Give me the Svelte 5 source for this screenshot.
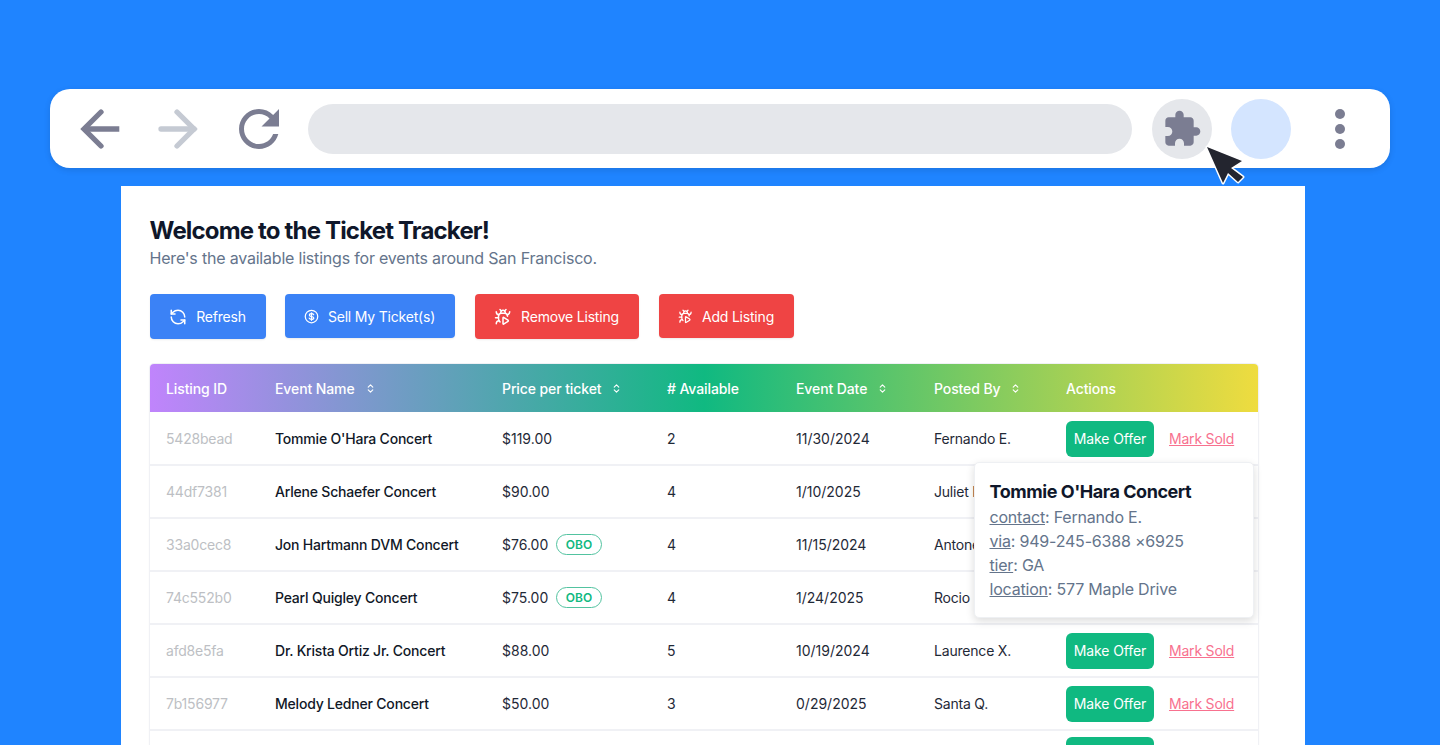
<script>
  const columns = [
    { label: 'Listing ID', sort: false },
    { label: 'Event Name', sort: true },
    { label: 'Price per ticket', sort: true },
    { label: '# Available', sort: false },
    { label: 'Event Date', sort: true },
    { label: 'Posted By', sort: true },
    { label: 'Actions', sort: false }
  ];
  const rows = [
    { id: '5428bead', name: "Tommie O'Hara Concert", price: '$119.00', obo: false, qty: 2, date: '11/30/2024', by: 'Fernando E.', actions: true },
    { id: '44df7381', name: 'Arlene Schaefer Concert', price: '$90.00', obo: false, qty: 4, date: '1/10/2025', by: 'Juliet I.', actions: false },
    { id: '33a0cec8', name: 'Jon Hartmann DVM Concert', price: '$76.00', obo: true, qty: 4, date: '11/15/2024', by: 'Antone R.', actions: false },
    { id: '74c552b0', name: 'Pearl Quigley Concert', price: '$75.00', obo: true, qty: 4, date: '1/24/2025', by: 'Rocio B.', actions: false },
    { id: 'afd8e5fa', name: 'Dr. Krista Ortiz Jr. Concert', price: '$88.00', obo: false, qty: 5, date: '10/19/2024', by: 'Laurence X.', actions: true },
    { id: '7b156977', name: 'Melody Ledner Concert', price: '$50.00', obo: false, qty: 3, date: '0/29/2025', by: 'Santa Q.', actions: true }
  ];
  const details = [
    ['contact', 'Fernando E.'],
    ['via', '949-245-6388 ×6925'],
    ['tier', 'GA'],
    ['location', '577 Maple Drive']
  ];
</script>

{#snippet bug()}
  <svg class="ico" viewBox="0 0 24 24" fill="none" stroke="currentColor" stroke-width="2" stroke-linecap="round" stroke-linejoin="round">
    <path d="M12.765 21.522a.5.5 0 0 1-.765-.424v-8.196a.5.5 0 0 1 .765-.424l5.878 3.674a1 1 0 0 1 0 1.696z" />
    <path d="M14.12 3.88 16 2" />
    <path d="M18 11a4 4 0 0 0-4-4h-4a4 4 0 0 0-4 4v3a6.1 6.1 0 0 0 2 4.5" />
    <path d="M20.97 5c0 2.1-1.6 3.8-3.5 4" />
    <path d="M3 21c0-2.1 1.7-3.9 3.8-4" />
    <path d="M6 13H2" />
    <path d="M6.53 9C4.6 8.8 3 7.1 3 5" />
    <path d="m8 2 1.88 1.88" />
    <path d="M9 7.13v-1a3.003 3.003 0 1 1 6 0v1" />
  </svg>
{/snippet}

<div class="page">
  <header class="toolbar">
    <svg class="nav" viewBox="0 0 60 60"><path class="arrow" d="M31 13 14 30l17 17" /><path class="tail" d="M49.3 30H14" /></svg>
    <svg class="nav faded" viewBox="0 0 60 60"><path class="arrow" d="M28 13l17 17-17 17" /><path class="arrow" d="M12 30h33" /></svg>
    <svg class="nav fill" viewBox="0 0 24 24"><path d="M17.65 6.35C16.2 4.9 14.21 4 12 4c-4.42 0-7.99 3.58-7.99 8s3.57 8 7.99 8c3.73 0 6.84-2.55 7.73-6h-2.08c-.82 2.33-3.04 4-5.65 4-3.31 0-6-2.69-6-6s2.69-6 6-6c1.66 0 3.14.69 4.22 1.78L13 11h7V4l-2.35 2.35z" /></svg>
    <div class="address"></div>
    <div class="round ext">
      <svg viewBox="0 0 24 24"><path d="M20.5 11H19V7c0-1.1-.9-2-2-2h-4V3.5C13 2.12 11.88 1 10.5 1S8 2.12 8 3.5V5H4c-1.1 0-1.99.9-1.99 2v3.8H3.5c1.49 0 2.7 1.21 2.7 2.7s-1.21 2.7-2.7 2.7H2V20c0 1.1.9 2 2 2h3.8v-1.5c0-1.49 1.21-2.7 2.7-2.7 1.49 0 2.7 1.21 2.7 2.7V22H17c1.1 0 2-.9 2-2v-4h1.5c1.38 0 2.5-1.12 2.5-2.5S21.88 11 20.5 11z" /></svg>
    </div>
    <div class="round avatar"></div>
    <div class="kebab"><span></span><span></span><span></span></div>
  </header>

  <svg class="cursor" viewBox="0 0 44 44">
    <path d="M4 2 39 16 28 23 40 32 35 37 25 28 20 38Z" fill="#23252f" stroke="#fff" stroke-width="3" stroke-linejoin="round" paint-order="stroke" />
  </svg>

  <main class="card">
    <h1>Welcome to the Ticket Tracker!</h1>
    <p class="sub">Here's the available listings for events around San Francisco.</p>

    <div class="actions">
      <button class="btn blue tall refresh">
        <svg class="ico" viewBox="0 0 24 24" fill="none" stroke="currentColor" stroke-width="2" stroke-linecap="round" stroke-linejoin="round">
          <path d="M21 12a9 9 0 0 0-9-9 9.75 9.75 0 0 0-6.74 2.74L3 8" /><path d="M3 3v5h5" />
          <path d="M3 12a9 9 0 0 0 9 9 9.75 9.75 0 0 0 6.74-2.74L21 16" /><path d="M16 16h5v5" />
        </svg>
        Refresh
      </button>
      <button class="btn blue sell">
        <svg class="ico small" viewBox="0 0 24 24" fill="none" stroke="currentColor" stroke-width="2" stroke-linecap="round" stroke-linejoin="round">
          <circle cx="12" cy="12" r="10" />
          <path d="M15.5 9.2c-.5-1-1.7-1.7-3.5-1.7-2 0-3.4.9-3.4 2.3 0 3.3 7 1.4 7 4.5 0 1.4-1.5 2.2-3.6 2.2-1.8 0-3.1-.7-3.6-1.8" />
          <path d="M12 6v12" />
        </svg>
        Sell My Ticket(s)
      </button>
      <button class="btn red tall remove">{@render bug()} Remove Listing</button>
      <button class="btn red add">{@render bug()} Add Listing</button>
    </div>

    <div class="table-wrap">
      <table>
        <colgroup>
          <col class="c1" /><col class="c2" /><col class="c3" /><col class="c4" /><col class="c5" /><col class="c6" /><col />
        </colgroup>
        <thead>
          <tr>
            {#each columns as c}
              <th>
                <span class="th">{c.label}
                  {#if c.sort}
                    <svg class="sort" viewBox="0 0 24 24" fill="none" stroke="currentColor" stroke-width="2.4" stroke-linecap="round" stroke-linejoin="round"><path d="m7 15 5 5 5-5" /><path d="m7 9 5-5 5 5" /></svg>
                  {/if}
                </span>
              </th>
            {/each}
          </tr>
        </thead>
        <tbody>
          {#each rows as r}
            <tr>
              <td class="id">{r.id}</td>
              <td class="name">{r.name}</td>
              <td>
                <span class="price">{r.price}{#if r.obo}<span class="obo">OBO</span>{/if}</span>
              </td>
              <td>{r.qty}</td>
              <td>{r.date}</td>
              <td class="by">{r.by}</td>
              <td>
                {#if r.actions}
                  <span class="row-actions">
                    <button class="offer">Make Offer</button>
                    <a href="#sold" class="sold">Mark Sold</a>
                  </span>
                {/if}
              </td>
            </tr>
          {/each}
          <tr>
            <td colspan="6"></td>
            <td><span class="row-actions"><button class="offer" aria-label="Make Offer"></button></span></td>
          </tr>
        </tbody>
      </table>

      <aside class="tip">
        <h2>Tommie O'Hara Concert</h2>
        {#each details as [k, v]}
          <p><u>{k}</u>: {v}</p>
        {/each}
      </aside>
    </div>
  </main>
</div>

<style>
  :global(body) {
    margin: 0;
    background: #1f84ff;
  }
  .page {
    position: relative;
    height: 745px;
    overflow: hidden;
    padding-top: 89px;
    box-sizing: border-box;
    background: #1f84ff;
    font-family: Inter, "Liberation Sans", sans-serif;
    font-size: 14px;
    color: #111827;
  }
  .toolbar {
    display: flex;
    align-items: center;
    gap: 19.25px;
    height: 79px;
    box-sizing: border-box;
    margin: 0 50px;
    padding: 0 20px;
    background: #fff;
    border-radius: 20px;
    box-shadow: 0 2px 6px rgba(0, 0, 0, 0.12);
  }
  .nav {
    width: 60px;
    height: 60px;
    flex: none;
    color: #7b7d92;
    fill: none;
  }
  .nav.fill {
    fill: #7b7d92;
  }
  .nav.faded {
    color: #c5cad3;
  }
  .arrow {
    stroke: currentColor;
    stroke-width: 5.3;
    stroke-linecap: round;
    stroke-linejoin: miter;
  }
  .tail {
    stroke: currentColor;
    stroke-width: 5.3;
  }
  .address {
    flex: 1;
    height: 50px;
    border-radius: 25px;
    background: #e5e7eb;
  }
  .round {
    display: flex;
    align-items: center;
    justify-content: center;
    width: 60px;
    height: 60px;
    flex: none;
    border-radius: 50%;
  }
  .ext {
    background: #e5e7eb;
  }
  .ext svg {
    width: 40px;
    height: 40px;
    fill: #7b7d92;
  }
  .avatar {
    background: #d4e5ff;
  }
  .kebab {
    display: flex;
    flex-direction: column;
    align-items: center;
    gap: 5px;
    width: 60px;
    flex: none;
  }
  .kebab span {
    width: 10px;
    height: 10px;
    border-radius: 50%;
    background: #7b7d92;
  }
  .cursor {
    position: absolute;
    left: 1203px;
    top: 145px;
    width: 44px;
    height: 44px;
    z-index: 3;
  }
  .card {
    width: 1184px;
    box-sizing: border-box;
    margin: 18px 0 0 121px;
    padding: 29px 46px 0 28.5px;
    background: #fff;
  }
  h1 {
    margin: 0;
    font-size: 24px;
    line-height: 32px;
    font-weight: 700;
    letter-spacing: -0.83px;
    color: #0f172a;
  }
  .sub {
    margin: -1px 0 0;
    font-size: 16px;
    line-height: 24px;
    letter-spacing: -0.2px;
    color: #64748b;
  }
  .actions {
    display: flex;
    align-items: flex-start;
    margin-top: 24px;
    height: 45px;
  }
  .btn {
    display: flex;
    align-items: center;
    justify-content: center;
    gap: 9px;
    height: 44px;
    padding: 0;
    border: 0;
    border-radius: 4px;
    color: #fff;
    font: 400 14px Inter, "Liberation Sans", sans-serif;
    letter-spacing: -0.2px;
    box-shadow: 0 1px 2px rgba(0, 0, 0, 0.08);
  }
  .tall {
    height: 45px;
  }
  .blue {
    background: #3b82f6;
  }
  .red {
    background: #ef4444;
  }
  .refresh {
    width: 116px;
    margin-right: 19px;
  }
  .sell {
    width: 170px;
    margin-right: 20px;
  }
  .remove {
    width: 164px;
    margin-right: 20px;
  }
  .add {
    width: 135px;
  }
  .ico {
    width: 18px;
    height: 18px;
    flex: none;
  }
  .ico.small {
    width: 15px;
    height: 15px;
  }
  .add .ico {
    width: 15px;
    height: 15px;
  }
  .table-wrap {
    position: relative;
    margin: 25px 0 0 0.5px;
    width: 1108px;
  }
  table {
    width: 100%;
    table-layout: fixed;
    border-collapse: separate;
    border-spacing: 0;
    border-radius: 4px;
    overflow: hidden;
    box-shadow: 0 0 0 1px #f0f1f5, 0 1px 3px rgba(0, 0, 0, 0.06);
  }
  .c1 {
    width: 109px;
  }
  .c2 {
    width: 227px;
  }
  .c3 {
    width: 165px;
  }
  .c4 {
    width: 129px;
  }
  .c5 {
    width: 138px;
  }
  .c6 {
    width: 132px;
  }
  thead tr {
    height: 48px;
    background: linear-gradient(90deg, #c084fc 0%, #10b981 50%, #efdc3f 100%);
  }
  th {
    padding: 0 0 0 16px;
    text-align: left;
    font-weight: 500;
    letter-spacing: -0.1px;
    color: #fff;
  }
  .th {
    display: inline-flex;
    align-items: center;
    gap: 10px;
  }
  .sort {
    width: 11px;
    height: 11px;
  }
  tbody tr {
    height: 53px;
  }
  tbody tr:first-child {
    height: 54px;
  }
  td {
    padding: 0 0 0 16px;
    color: #1f2937;
    white-space: nowrap;
    border-bottom: 2px solid #f0f1f5;
  }
  tbody tr:first-child td {
    padding-top: 1px;
  }
  .id {
    color: #bdbfc4;
    letter-spacing: -0.2px;
  }
  .name {
    font-weight: 500;
    letter-spacing: -0.2px;
    color: #111827;
  }
  .by {
    letter-spacing: -0.2px;
  }
  .price {
    display: inline-flex;
    align-items: center;
    gap: 7.5px;
  }
  .obo {
    padding: 0 9px;
    line-height: 19px;
    border: 1px solid #52c3a0;
    border-radius: 11px;
    font-size: 12px;
    font-weight: 600;
    color: #10b981;
  }
  .row-actions {
    display: inline-flex;
    align-items: center;
    gap: 15px;
  }
  .offer {
    width: 88px;
    height: 36px;
    padding: 0;
    border: 0;
    border-radius: 6px;
    background: #10b981;
    color: #fff;
    font: 400 14px Inter, "Liberation Sans", sans-serif;
    letter-spacing: -0.1px;
  }
  .sold {
    color: #f8718f;
    letter-spacing: -0.2px;
  }
  .tip {
    position: absolute;
    left: 823.5px;
    top: 98px;
    width: 280px;
    height: 156px;
    box-sizing: border-box;
    padding: 15px;
    background: #fff;
    border: 1px solid #eef0f3;
    border-radius: 5px;
    box-shadow: 0 3px 8px rgba(0, 0, 0, 0.14);
    color: #64748b;
    font-size: 16px;
    line-height: 24px;
    letter-spacing: -0.2px;
  }
  .tip h2 {
    margin: 0;
    font-size: 18px;
    line-height: 27px;
    font-weight: 700;
    letter-spacing: -0.45px;
    color: #0f172a;
  }
  .tip p {
    margin: 0;
  }
</style>
